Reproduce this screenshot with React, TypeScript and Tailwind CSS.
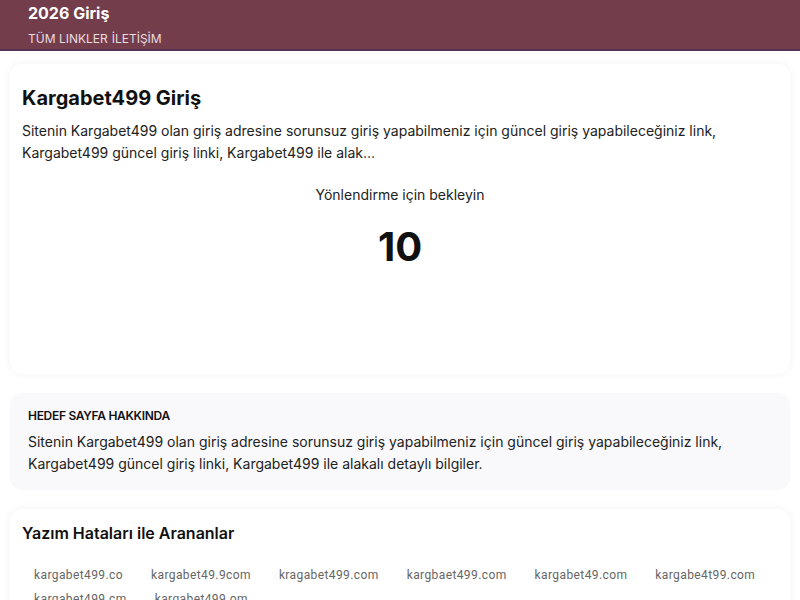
const typos = [
  "kargabet499.co",
  "kargabet49.9com",
  "kragabet499.com",
  "kargbaet499.com",
  "kargabet49.com",
  "kargabe4t99.com",
  "kargabet499.cm",
  "kargabet499.om",
];

export default function App() {
  return (
    <div className="min-h-screen bg-white text-[#111] font-['Inter',sans-serif]">
      {/* Header */}
      <header className="bg-[#733d4b] border-b-2 border-[#55334f] px-7 pt-[2px] pb-[2px]">
        <div className="text-white font-bold text-base leading-[22px]">2026 Giriş</div>
        <nav className="mt-[7px] flex gap-1 text-xs leading-4 text-[#e9dde0]">
          <a href="#">TÜM LINKLER</a>
          <a href="#">İLETİŞİM</a>
        </nav>
      </header>

      {/* Redirect card */}
      <section className="mx-[10px] mt-[13px] rounded-xl bg-white shadow-[0_0_10px_rgba(0,0,0,0.06)] px-3 pt-5 pb-[103px]">
        <h1 className="text-[20px] leading-7 font-bold">Kargabet499 Giriş</h1>
        <p className="mt-2 text-sm leading-[22px] text-[#222]">
          Sitenin Kargabet499 olan giriş adresine sorunsuz giriş yapabilmeniz için güncel giriş yapabileceğiniz link,
          Kargabet499 güncel giriş linki, Kargabet499 ile alak…
        </p>
        <div className="mt-[21px] text-center text-sm leading-5 text-[#222]">Yönlendirme için bekleyin</div>
        <div className="mt-[18px] text-center text-[40px] leading-[48px] font-bold">10</div>
      </section>

      {/* About target page */}
      <section className="mx-[10px] mt-[19px] rounded-xl bg-[#f9f9fb] px-[18px] pt-[15px] pb-[15px]">
        <h2 className="text-xs leading-4 font-semibold tracking-tight uppercase">Hedef Sayfa Hakkında</h2>
        <p className="mt-[7px] text-sm leading-[22px] text-[#222]">
          Sitenin Kargabet499 olan giriş adresine sorunsuz giriş yapabilmeniz için güncel giriş yapabileceğiniz link,
          Kargabet499 güncel giriş linki, Kargabet499 ile alakalı detaylı bilgiler.
        </p>
      </section>

      {/* Typos */}
      <section className="mx-[10px] mt-[19px] rounded-xl bg-white shadow-[0_0_10px_rgba(0,0,0,0.06)] px-3 pt-3 pb-4">
        <h2 className="text-base leading-6 font-semibold">Yazım Hataları ile Arananlar</h2>
        <div className="mt-[18px] flex flex-wrap gap-x-1 max-w-[760px]">
          {typos.map((t) => (
            <a
              key={t}
              href="#"
              className="px-3 py-1 text-xs leading-4 tracking-[0.4px] text-[#666] font-['Roboto',sans-serif]"
            >
              {t}
            </a>
          ))}
        </div>
      </section>
    </div>
  );
}
